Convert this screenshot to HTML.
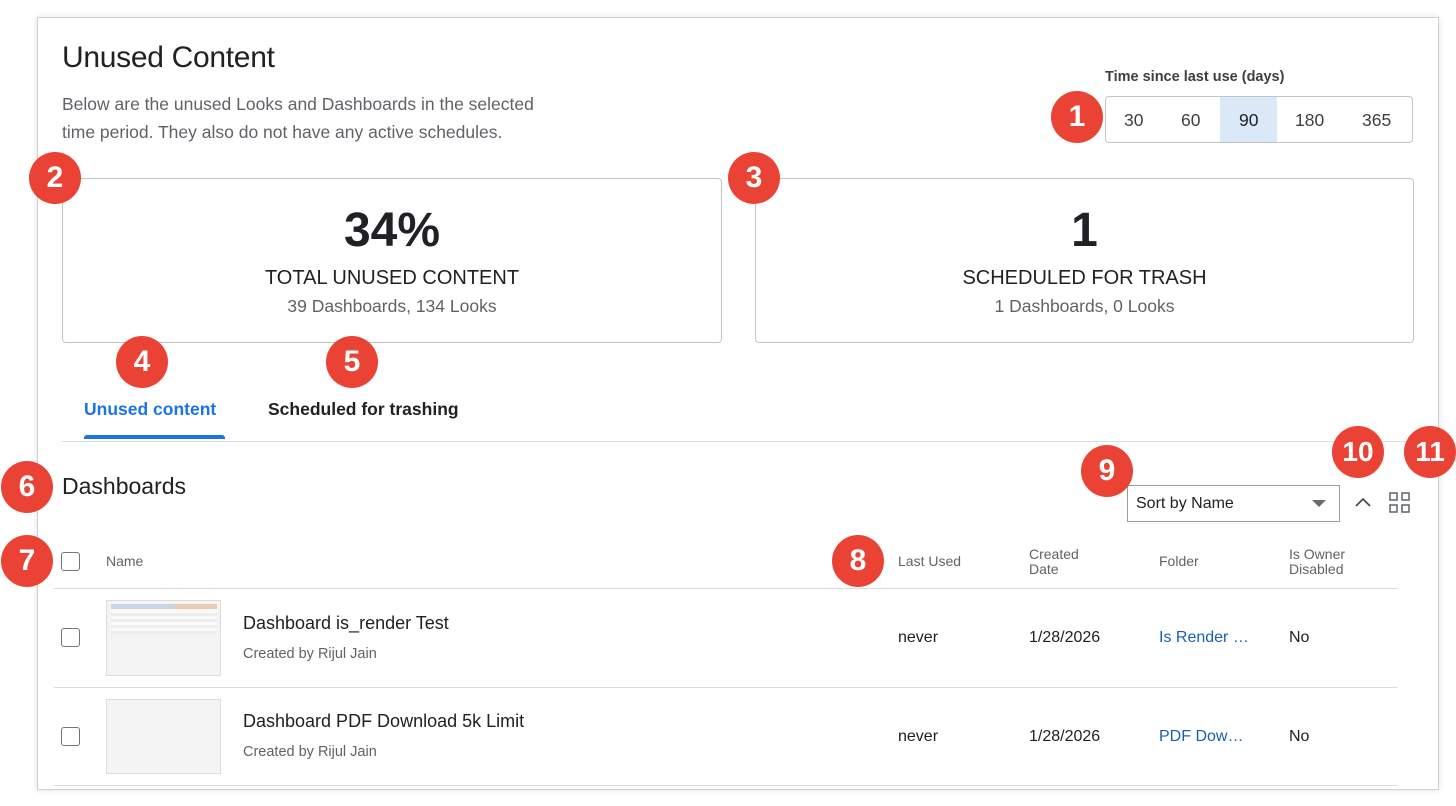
<!DOCTYPE html>
<html><head><meta charset="utf-8"><style>
*{box-sizing:border-box;margin:0;padding:0}
body{width:1456px;height:806px;background:#fff;position:relative;overflow:hidden;font-family:"Liberation Sans",Arial,sans-serif;color:#202124}
.a{position:absolute}
.panel{left:37px;top:17px;width:1402px;height:773px;border:1px solid #d0d0d0;box-shadow:0 0 6px rgba(0,0,0,.12);background:#fff}
.b{position:absolute;width:52px;height:52px;border-radius:50%;background:#ea4335;color:#fff;font-weight:bold;font-size:30px;text-align:center;line-height:52px;z-index:5}
.card{border:1px solid #c4c4c4;border-radius:4px;text-align:center;background:#fff}
.cb{position:absolute;width:19px;height:19px;border:1.5px solid #757575;border-radius:3px}
.g{color:#5f6368}
.hd{font-size:14px;color:#5f6368;line-height:15px}
.line{position:absolute;height:1px;background:#dadce0}
</style></head><body>
<div class="a panel"></div>
<div class="a" style="left:62px;top:41px;font-size:30px;letter-spacing:-0.3px">Unused Content</div>
<div class="a g" style="left:62px;top:90px;font-size:17.5px;line-height:28px;width:515px">Below are the unused Looks and Dashboards in the selected<br>time period. They also do not have any active schedules.</div>
<div class="a" style="left:1105px;top:69px;font-size:14.5px;font-weight:bold;color:#3c4043">Time since last use (days)</div>
<div class="a" style="left:1105px;top:96px;width:308px;height:47px;border:1px solid #c4c4c4;border-radius:4px;overflow:hidden;font-size:17.5px;color:#3c4043">
<div class="a" style="left:114px;top:0;width:57px;height:47px;background:#dbe8f8"></div>
<span class="a" style="left:18px;top:13px">30</span><span class="a" style="left:75px;top:13px">60</span><span class="a" style="left:133px;top:13px;color:#202124">90</span><span class="a" style="left:189px;top:13px">180</span><span class="a" style="left:256px;top:13px">365</span></div>
<div class="a card" style="left:62px;top:178px;width:660px;height:165px">
<div style="font-size:48px;font-weight:bold;margin-top:25px;line-height:54px">34%</div>
<div style="font-size:20px;margin-top:9px">TOTAL UNUSED CONTENT</div>
<div class="g" style="font-size:17.5px;margin-top:6px">39 Dashboards, 134 Looks</div></div>
<div class="a card" style="left:755px;top:178px;width:659px;height:165px">
<div style="font-size:48px;font-weight:bold;margin-top:25px;line-height:54px">1</div>
<div style="font-size:20px;margin-top:9px">SCHEDULED FOR TRASH</div>
<div class="g" style="font-size:17.5px;margin-top:6px">1 Dashboards, 0 Looks</div></div>
<div class="a" style="left:84px;top:399px;font-size:17.5px;font-weight:bold;color:#1a73e8">Unused content</div>
<div class="a" style="left:84px;top:435px;width:141px;height:4px;background:#1a73e8;border-radius:3px 3px 0 0"></div>
<div class="a" style="left:268px;top:399px;font-size:17.5px;font-weight:bold">Scheduled for trashing</div>
<div class="line" style="left:62px;top:441px;width:1352px"></div>
<div class="a" style="left:62px;top:473px;font-size:23px">Dashboards</div>
<div class="a" style="left:1127px;top:485px;width:213px;height:37px;border:1.5px solid #9e9e9e;font-size:16px;padding:9px 8px">Sort by Name</div>
<div class="a" style="left:1312px;top:500px;border-left:7px solid transparent;border-right:7px solid transparent;border-top:7px solid #6b6b6b"></div>
<svg class="a" style="left:1354px;top:496px" width="18" height="14"><path d="M2 10 L9 3 L16 10" stroke="#444" stroke-width="1.6" fill="none"/></svg>
<svg class="a" style="left:1389px;top:492px" width="22" height="22" fill="none" stroke="#5f6368" stroke-width="1.5"><rect x="1" y="1" width="7" height="7"/><rect x="13" y="1" width="7" height="7"/><rect x="1" y="13" width="7" height="7"/><rect x="13" y="13" width="7" height="7"/></svg>
<div class="cb" style="left:61px;top:552px"></div>
<div class="a hd" style="left:106px;top:554px">Name</div>
<div class="a hd" style="left:898px;top:554px">Last Used</div>
<div class="a hd" style="left:1029px;top:547px">Created<br>Date</div>
<div class="a hd" style="left:1159px;top:554px">Folder</div>
<div class="a hd" style="left:1289px;top:547px">Is Owner<br>Disabled</div>
<div class="line" style="left:54px;top:588px;width:1344px"></div>
<div class="cb" style="left:61px;top:628px"></div>
<div class="a" style="left:106px;top:600px;width:115px;height:76px;border:1px solid #ddd;background:#f4f4f4">
<div class="a" style="left:4px;top:3px;width:106px;height:5px;background:linear-gradient(90deg,#c9d6e3 60%,#e9cdb5 60%)"></div>
<div class="a" style="left:4px;top:9px;width:106px;height:24px;background:repeating-linear-gradient(#fafafa 0 3px,#eee 3px 6px)"></div></div>
<div class="a" style="left:243px;top:613px;font-size:18px">Dashboard is_render Test</div>
<div class="a g" style="left:243px;top:646px;font-size:14.5px">Created by Rijul Jain</div>
<div class="a" style="left:898px;top:629px;font-size:16px">never</div>
<div class="a" style="left:1029px;top:629px;font-size:16px">1/28/2026</div>
<div class="a" style="left:1159px;top:629px;font-size:16px;color:#1a5fb4">Is Render …</div>
<div class="a" style="left:1289px;top:629px;font-size:16px">No</div>
<div class="line" style="left:54px;top:687px;width:1344px"></div>
<div class="cb" style="left:61px;top:727px"></div>
<div class="a" style="left:106px;top:699px;width:115px;height:75px;border:1px solid #ddd;background:#f4f4f4"></div>
<div class="a" style="left:243px;top:711px;font-size:18px">Dashboard PDF Download 5k Limit</div>
<div class="a g" style="left:243px;top:744px;font-size:14.5px">Created by Rijul Jain</div>
<div class="a" style="left:898px;top:728px;font-size:16px">never</div>
<div class="a" style="left:1029px;top:728px;font-size:16px">1/28/2026</div>
<div class="a" style="left:1159px;top:728px;font-size:16px;color:#1a5fb4">PDF Dow…</div>
<div class="a" style="left:1289px;top:728px;font-size:16px">No</div>
<div class="line" style="left:54px;top:785px;width:1344px"></div>
<div class="b" style="left:1051px;top:91px">1</div>
<div class="b" style="left:29px;top:152px">2</div>
<div class="b" style="left:728px;top:152px">3</div>
<div class="b" style="left:116px;top:336px">4</div>
<div class="b" style="left:326px;top:336px">5</div>
<div class="b" style="left:1px;top:461px">6</div>
<div class="b" style="left:1px;top:535px">7</div>
<div class="b" style="left:832px;top:535px">8</div>
<div class="b" style="left:1081px;top:445px">9</div>
<div class="b" style="left:1332px;top:426px;font-size:28px">10</div>
<div class="b" style="left:1404px;top:426px;font-size:28px">11</div>
</body></html>
